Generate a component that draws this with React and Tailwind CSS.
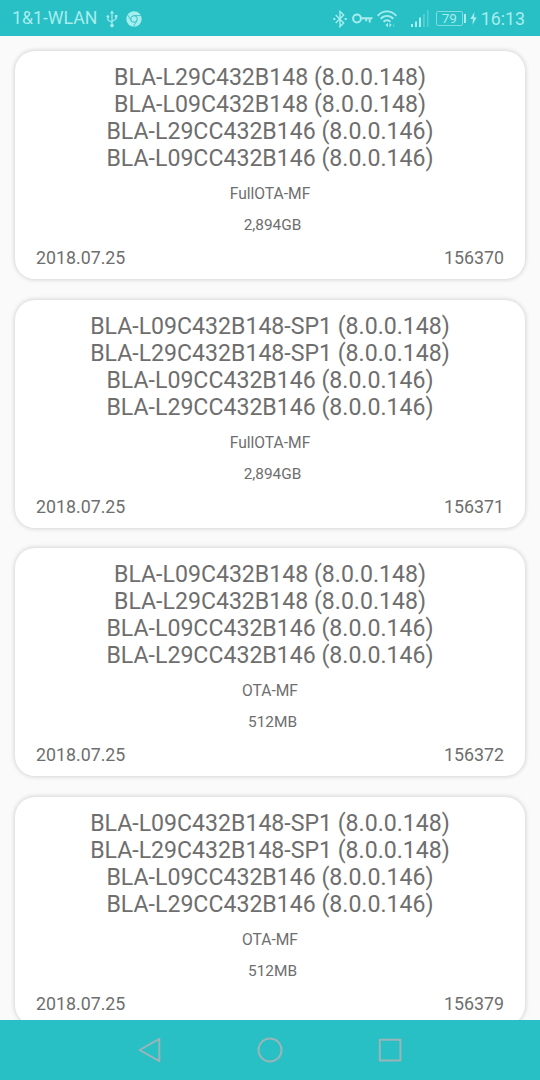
const updates = [
  {
    versions: [
      'BLA-L29C432B148 (8.0.0.148)',
      'BLA-L09C432B148 (8.0.0.148)',
      'BLA-L29CC432B146 (8.0.0.146)',
      'BLA-L09CC432B146 (8.0.0.146)',
    ],
    kind: 'FullOTA-MF',
    size: '2,894GB',
    date: '2018.07.25',
    id: '156370',
  },
  {
    versions: [
      'BLA-L09C432B148-SP1 (8.0.0.148)',
      'BLA-L29C432B148-SP1 (8.0.0.148)',
      'BLA-L09CC432B146 (8.0.0.146)',
      'BLA-L29CC432B146 (8.0.0.146)',
    ],
    kind: 'FullOTA-MF',
    size: '2,894GB',
    date: '2018.07.25',
    id: '156371',
  },
  {
    versions: [
      'BLA-L09C432B148 (8.0.0.148)',
      'BLA-L29C432B148 (8.0.0.148)',
      'BLA-L09CC432B146 (8.0.0.146)',
      'BLA-L29CC432B146 (8.0.0.146)',
    ],
    kind: 'OTA-MF',
    size: '512MB',
    date: '2018.07.25',
    id: '156372',
  },
  {
    versions: [
      'BLA-L09C432B148-SP1 (8.0.0.148)',
      'BLA-L29C432B148-SP1 (8.0.0.148)',
      'BLA-L09CC432B146 (8.0.0.146)',
      'BLA-L29CC432B146 (8.0.0.146)',
    ],
    kind: 'OTA-MF',
    size: '512MB',
    date: '2018.07.25',
    id: '156379',
  },
];

function UsbIcon() {
  return (
    <svg className="ml-[9px] h-[18px] w-3" viewBox="0 0 12 18" fill="none" stroke="currentColor" strokeWidth="1.2">
      <path d="M6 3v12M6 12.5L1.9 10V7.5M6 11.5L10.1 9V6.5" />
      <path d="M6 .3L8 3.6H4z" fill="currentColor" stroke="none" />
      <circle cx="6" cy="15.6" r="1.8" fill="currentColor" stroke="none" />
      <circle cx="1.9" cy="6.6" r="1.4" fill="currentColor" stroke="none" />
      <path d="M8.8 5h2.6v2.6H8.8z" fill="currentColor" stroke="none" />
    </svg>
  );
}

function ChromeIcon() {
  return (
    <svg className="ml-[8px] size-4" viewBox="0 0 16 16" fill="none">
      <circle cx="8" cy="8" r="7.7" fill="currentColor" />
      <circle cx="8" cy="8" r="3.3" stroke="#28bfc5" strokeWidth=".9" />
      <path d="M8 4.6h6.8M5.1 9.7L1.7 3.9M10.9 9.7l-3.4 5.9" stroke="#28bfc5" strokeWidth=".8" />
    </svg>
  );
}

function BluetoothIcon() {
  return (
    <svg className="h-[18px] w-3.5" viewBox="0 0 14 18" fill="none" stroke="currentColor" strokeWidth="1.4">
      <path d="M2.7 5l8 8L7 16.6V1.4L10.7 5l-8 8" />
      <path d="M.3 9h2M11.7 9h2" strokeWidth="1.8" />
    </svg>
  );
}

function KeyIcon() {
  return (
    <svg className="ml-[5px] h-3 w-[21px]" viewBox="0 0 21 12" fill="none" stroke="currentColor" strokeWidth="2">
      <circle cx="5" cy="5.5" r="3.9" />
      <path d="M9 5.2h11.5M17.7 5.2V9.6M14.2 5.2v3" />
    </svg>
  );
}

function WifiIcon() {
  return (
    <svg className="ml-[4px] h-[18px] w-5" viewBox="0 0 20 18" fill="none" stroke="currentColor" strokeWidth="1.9">
      <path d="M.7 5.8C5.9-.1 14.1-.1 19.3 5.8M3.7 8.8c3.5-3.9 9.1-3.9 12.6 0M6.5 11.8c2-2.1 5-2.1 7 0" />
      <path d="M11 13v4.2l-2.6-2.1zM12.4 13l2.4 2.1-2.4 2.1z" fill="currentColor" stroke="none" />
      <path d="M16 13.6l2.2 3h-2.2z" fill="currentColor" stroke="none" opacity=".4" />
    </svg>
  );
}

function SignalIcon() {
  return (
    <svg className="ml-[14px] h-[17px] w-[18px]" viewBox="0 0 18 17" fill="currentColor">
      <path d="M0 14h2v3H0zM4 11.5h2V17H4zM8 7.5h2V17H8z" />
      <path d="M12 4h1.8v13H12zM16 0h1.5v17H16z" opacity=".35" />
    </svg>
  );
}

function Battery() {
  return (
    <div className="ml-[7px] flex items-center">
      <div className="flex h-[15px] w-[27px] items-center justify-center rounded-[2px] border border-[#7bdde0] text-[13.5px] leading-none">79</div>
      <div className="ml-px h-[9px] w-[2px] bg-[#a6edee]" />
      <svg className="ml-1 h-[13px] w-[7px]" viewBox="0 0 7 13" fill="currentColor">
        <path d="M4.5 0L.3 7.1H3L2.4 13l4.3-7.7H4z" />
      </svg>
    </div>
  );
}

function StatusBar() {
  return (
    <header className="flex h-9 shrink-0 items-center bg-[#28bfc5] pt-px pr-[15px] pl-3 text-[#a6edee]">
      <span className="text-[17.7px] leading-none">1&amp;1-WLAN</span>
      <UsbIcon />
      <ChromeIcon />
      <div className="ml-auto flex items-center">
        <BluetoothIcon />
        <KeyIcon />
        <WifiIcon />
        <SignalIcon />
        <Battery />
        <span className="ml-[4px] text-[17.8px] leading-none">16:13</span>
      </div>
    </header>
  );
}

function UpdateCard({ update }) {
  return (
    <article className="flex h-[228px] shrink-0 flex-col rounded-[20px] bg-white px-[21px] pt-[13px] shadow-[0_0_4px_1px_rgba(0,0,0,0.15)]">
      <div className="-mx-2 text-center text-[23.1px] leading-[27px] whitespace-nowrap">
        {update.versions.map((version) => (
          <div key={version}>{version}</div>
        ))}
      </div>
      <div className="mt-3 text-center text-[15.6px] leading-5">{update.kind}</div>
      <div className="mt-[11px] pl-[5px] text-center text-[15.4px] leading-5">{update.size}</div>
      <div className="mt-3 flex justify-between text-[17.8px] leading-[22px]">
        <span>{update.date}</span>
        <span>{update.id}</span>
      </div>
    </article>
  );
}

function NavigationBar() {
  return (
    <nav className="flex h-[60px] shrink-0 items-center justify-center gap-24 bg-[#28bfc5] text-[#9bb5b7]">
      <svg className="size-6 overflow-visible" viewBox="0 0 24 24" fill="none" stroke="currentColor" strokeWidth="2" strokeLinejoin="round">
        <path d="M21.3.8v22.4L1.6 12z" />
      </svg>
      <svg className="size-6 overflow-visible" viewBox="0 0 24 24" fill="none" stroke="currentColor" strokeWidth="2">
        <circle cx="12" cy="12" r="11.5" />
      </svg>
      <svg className="size-6" viewBox="0 0 24 24" fill="none" stroke="currentColor" strokeWidth="2" strokeLinejoin="round">
        <path d="M1.8 1.8h20.6v20.6H1.8z" />
      </svg>
    </nav>
  );
}

export default function App() {
  return (
    <div className="flex h-[1080px] w-[540px] flex-col overflow-hidden bg-[#fafafa] font-['Roboto',sans-serif] text-[#6e6e6e]">
      <StatusBar />
      <main className="flex min-h-0 flex-1 flex-col gap-[20.5px] overflow-hidden px-[15px] pt-[15.4px]">
        {updates.map((update) => (
          <UpdateCard key={update.id} update={update} />
        ))}
      </main>
      <NavigationBar />
    </div>
  );
}
